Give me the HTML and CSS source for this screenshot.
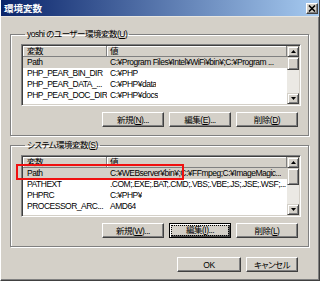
FILE: index.html
```html
<!DOCTYPE html>
<html lang="ja">
<head>
    <meta charset="UTF-8">
    <title>環境変数</title>
    <link rel="stylesheet" href="styles.css">
</head>
<body>
    <div class="window">
        <div class="titlebar">
            <span class="title">環境変数</span>
            <span class="close">
                <svg width="8" height="7" viewBox="0 0 8 7"><path d="M1 0.5 L7 6.5 M7 0.5 L1 6.5" stroke="#000" stroke-width="1.6"/></svg>
            </span>
        </div>

        <div class="content">
            <!-- ユーザー環境変数 -->
            <fieldset class="group">
                <legend>yoshi のユーザー環境変数(<u>U</u>)</legend>
                <div class="list">
                    <div class="rows">
                        <div class="head"><span class="c1">変数</span><span class="c2">値</span></div>
                        <div class="row sel"><span class="c1">Path</span><span class="c2">C:¥Program Files¥Intel¥WiFi¥bin¥;C:¥Program ...</span></div>
                        <div class="row"><span class="c1">PHP_PEAR_BIN_DIR</span><span class="c2">C:¥PHP</span></div>
                        <div class="row"><span class="c1">PHP_PEAR_DATA_...</span><span class="c2">C:¥PHP¥data</span></div>
                        <div class="row"><span class="c1">PHP_PEAR_DOC_DIR</span><span class="c2">C:¥PHP¥docs</span></div>
                    </div>
                    <div class="scroll">
                        <div class="sbtn"><svg width="5" height="3" viewBox="0 0 5 3"><path d="M2.5 0 L5 3 L0 3 Z"/></svg></div>
                        <div class="thumb"></div>
                        <div class="track"></div>
                        <div class="sbtn"><svg width="5" height="3" viewBox="0 0 5 3"><path d="M0 0 L5 0 L2.5 3 Z"/></svg></div>
                    </div>
                </div>
                <div class="buttons">
                    <button>新規(<u>N</u>)...</button>
                    <button>編集(<u>E</u>)...</button>
                    <button>削除(<u>D</u>)</button>
                </div>
            </fieldset>

            <!-- システム環境変数 -->
            <fieldset class="group">
                <legend>システム環境変数(<u>S</u>)</legend>
                <div class="list">
                    <span class="mark"></span>
                    <div class="rows">
                        <div class="head"><span class="c1">変数</span><span class="c2">値</span></div>
                        <div class="row sel"><span class="c1">Path</span><span class="c2">C:¥WEBserver¥bin¥;C:¥FFmpeg;C:¥ImageMagic...</span></div>
                        <div class="row"><span class="c1">PATHEXT</span><span class="c2">.COM;.EXE;.BAT;.CMD;.VBS;.VBE;.JS;.JSE;.WSF;...</span></div>
                        <div class="row"><span class="c1">PHPRC</span><span class="c2">C:¥PHP¥</span></div>
                        <div class="row"><span class="c1">PROCESSOR_ARC...</span><span class="c2">AMD64</span></div>
                    </div>
                    <div class="scroll">
                        <div class="sbtn"><svg width="5" height="3" viewBox="0 0 5 3"><path d="M2.5 0 L5 3 L0 3 Z"/></svg></div>
                        <div class="thumb big"></div>
                        <div class="track"></div>
                        <div class="sbtn"><svg width="5" height="3" viewBox="0 0 5 3"><path d="M0 0 L5 0 L2.5 3 Z"/></svg></div>
                    </div>
                </div>
                <div class="buttons">
                    <button>新規(<u>W</u>)...</button>
                    <button class="default"><span>編集(<u>I</u>)...</span></button>
                    <button>削除(<u>L</u>)</button>
                </div>
            </fieldset>

            <div class="buttons footer">
                <button class="ok">OK</button>
                <button class="cancel">キャンセル</button>
            </div>
        </div>
    </div>
</body>
</html>
```

FILE: styles.css
```css
body {
    margin: 0;
    padding: 0;
    background: #d4d0c8;
    font-family: "Liberation Sans", "Noto Sans CJK JP", sans-serif;
    font-size: 8.5px;
    letter-spacing: -0.5px;
    font-feature-settings: "palt";
    color: #000;
}
.window {
    width: 320px;
    height: 281px;
    box-sizing: border-box;
    border-left: 1px solid #fff;
    border-right: 1px solid #404040;
    border-bottom: 1px solid #404040;
    box-shadow: inset -1px -1px 0 #808080;
    overflow: hidden;
}
.titlebar {
    height: 16px;
    background: linear-gradient(90deg, #0a246a, #a6caf0);
    display: flex;
    align-items: center;
    justify-content: space-between;
    padding: 0 1px 0 3px;
    border-bottom: 1px solid #e8e6e0;
}
.title {
    color: #fff;
    font-weight: bold;
    font-size: 9.5px;
    letter-spacing: 0;
    font-family: "Noto Sans CJK JP", sans-serif;
}
.close {
    width: 12px;
    height: 11px;
    box-sizing: border-box;
    background: #d4d0c8;
    border: 1px solid;
    border-color: #fff #404040 #404040 #fff;
    box-shadow: inset -1px -1px 0 #808080;
    display: flex;
    align-items: center;
    justify-content: center;
}
.close svg {
    display: block;
}
.content {
    padding: 11px 10px 0 9px;
}
.group {
    margin: 0 0 3px 0;
    padding: 4px 7px 8px 10px;
    border: 1px solid #808080;
    box-shadow: 1px 1px 0 #fff, inset 1px 1px 0 #fff;
    min-width: 0;
}
.group legend {
    padding: 0 2px;
    margin-left: 4px;
    line-height: 12px;
}
.list {
    position: relative;
    height: 62px;
    box-sizing: border-box;
    border: 1px solid;
    border-color: #808080 #fff #fff #808080;
    box-shadow: inset 1px 1px 0 #404040, inset -1px -1px 0 #d4d0c8;
    background: #fff;
    padding: 1px;
    display: flex;
}
.rows {
    flex: 1;
    min-width: 0;
    overflow: hidden;
}
.head, .row {
    display: flex;
    white-space: nowrap;
}
.head {
    height: 11px;
    line-height: 10px;
    background: #d4d0c8;
}
.head span {
    box-sizing: border-box;
    border-right: 1px solid #808080;
    border-bottom: 1px solid #808080;
    box-shadow: inset 1px 1px 0 #fff;
}
.head .c2 {
    flex: 1;
}
.row {
    height: 11px;
    line-height: 11px;
}
.c1 {
    width: 84px;
    flex-shrink: 0;
    padding-left: 4px;
    box-sizing: border-box;
    overflow: hidden;
}
.c2 {
    padding-left: 3px;
    overflow: hidden;
}
.sel {
    background: #d4d0c8;
}
.mark {
    position: absolute;
    left: -6px;
    top: 8px;
    width: 168px;
    height: 16px;
    box-sizing: border-box;
    border: 2px solid #f01010;
}
.scroll {
    width: 12px;
    display: flex;
    flex-direction: column;
}
.sbtn, .thumb {
    box-sizing: border-box;
    background: #d4d0c8;
    border: 1px solid;
    border-color: #d4d0c8 #404040 #404040 #d4d0c8;
    box-shadow: inset 1px 1px 0 #fff, inset -1px -1px 0 #808080;
}
.sbtn {
    height: 11px;
    display: flex;
    align-items: center;
    justify-content: center;
}
.sbtn svg {
    display: block;
}
.thumb {
    height: 13px;
}
.thumb.big {
    height: 17px;
}
.track {
    flex: 1;
    background: #ebe9e4;
}
.buttons {
    display: flex;
    justify-content: flex-end;
    gap: 5px;
    margin: 6px 3px 0 0;
}
button {
    width: 62px;
    height: 15px;
    padding: 0;
    box-sizing: border-box;
    background: #d4d0c8;
    border: 1px solid;
    border-color: #fff #404040 #404040 #fff;
    box-shadow: inset -1px -1px 0 #808080;
    font: inherit;
    letter-spacing: inherit;
    font-feature-settings: "palt";
    line-height: 12px;
    color: #000;
}
button u {
    text-underline-offset: 1px;
}
button.default {
    border: 1px solid #000;
    box-shadow: inset 1px 1px 0 #fff, inset -1px -1px 0 #404040, inset -2px -2px 0 #808080;
    padding: 2px;
}
button.default span {
    display: block;
    height: 100%;
    line-height: 9px;
    outline: 1px dotted #000;
}
.footer {
    margin: 10px 11px 0 0;
}
.footer .ok {
    width: 64px;
}
.footer .cancel {
    width: 52px;
}
```
